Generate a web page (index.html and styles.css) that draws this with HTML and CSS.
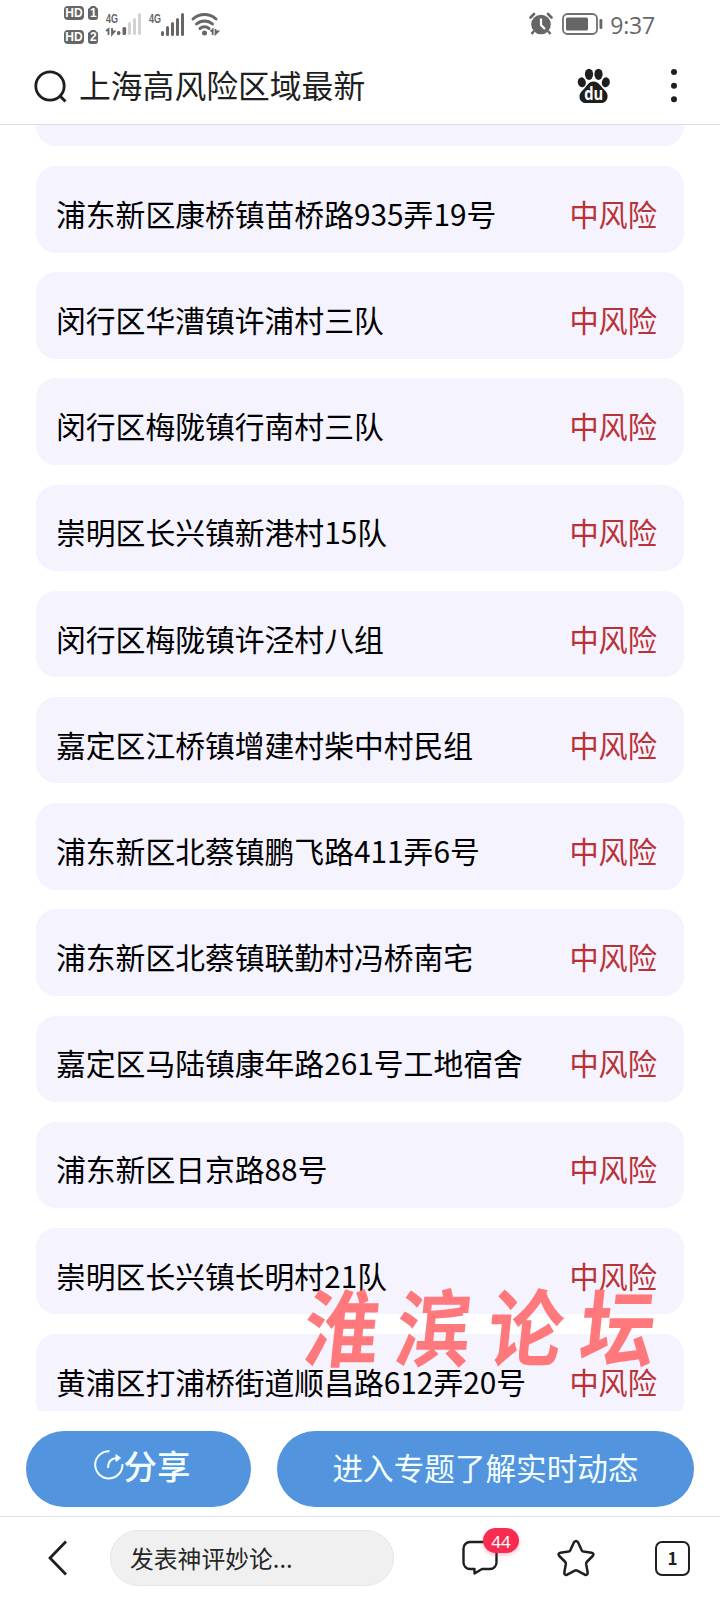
FILE: index.html
```html
<!DOCTYPE html>
<html lang="zh-CN">
<head>
    <meta charset="UTF-8">
    <meta name="viewport" content="width=device-width, initial-scale=1.0">
    <title>上海高风险区域最新</title>
    <link rel="stylesheet" href="styles.css">
</head>
<body>

    <div class="page">
        <div class="status-bar">
            <svg class="status-left" width="156" height="48" viewBox="0 0 156 48">
                <g fill="#666">
                    <rect x="0" y="6" width="20" height="14" rx="4"/>
                    <path d="M27.500 6h3.500l3 3v8a3 3 0 0 1-3 3h-4a3 3 0 0 1-3-3V9z"/>
                    <rect x="0" y="30" width="20" height="14" rx="4"/>
                    <path d="M27.500 30h3.500l3 3v8a3 3 0 0 1-3 3h-4a3 3 0 0 1-3-3v-8z"/>
                    <rect x="53" y="31" width="3.4" height="4" rx="1.5"/>
                    <rect x="58.5" y="27" width="3.6" height="8" rx="1.5"/>
                    <rect x="97" y="31" width="3" height="5" rx="1.5"/>
                    <rect x="102" y="26" width="3" height="10" rx="1.5"/>
                    <rect x="107" y="22" width="3" height="14" rx="1.5"/>
                    <rect x="112" y="18" width="3" height="18" rx="1.5"/>
                    <rect x="117" y="13" width="3" height="23" rx="1.5"/>
                </g>
                <g fill="#d2d2d2">
                    <rect x="64" y="22" width="3" height="13" rx="1.5"/>
                    <rect x="69" y="18" width="3" height="17" rx="1.5"/>
                    <rect x="74" y="13" width="3" height="22" rx="1.5"/>
                </g>
                <g class="hd-text">
                    <text x="10" y="17.2">HD</text>
                    <text x="29.3" y="17.2">1</text>
                    <text x="10" y="41.2">HD</text>
                    <text x="29.3" y="41.2">2</text>
                </g>
                <g class="net-text">
                    <text x="42" y="22.500" textLength="12" lengthAdjust="spacingAndGlyphs">4G</text>
                    <text x="85" y="22.500" textLength="12" lengthAdjust="spacingAndGlyphs">4G</text>
                </g>
                <g fill="none" stroke="#666" stroke-width="1.800">
                    <path d="M42 31l2.500-2v6M48 28v6.500l2.500-3h-2"/>
                    <path d="M146.500 31.500l2.200-2v5.500M151.500 29v5l2.500-2.500h-2"/>
                </g>
                <g fill="none" stroke="#666" stroke-width="3" stroke-linecap="round">
                    <path d="M129 19a17 17 0 0 1 23 0"/>
                    <path d="M132.500 24a12 12 0 0 1 16 0"/>
                    <path d="M136 28.500a7 7 0 0 1 9 0"/>
                </g>
                <circle cx="140.500" cy="33" r="2.500" fill="#666"/>
            </svg>
            <div class="status-right">
                <svg width="24" height="24" viewBox="0 0 24 24">
                    <circle cx="12" cy="12.500" r="9.800" fill="#666"/>
                    <path d="M1.500 5.500L5 2M22.500 5.500L19 2" stroke="#666" stroke-width="2.600" stroke-linecap="round"/>
                    <path d="M5 19l-2.500 3M19 19l2.500 3" stroke="#666" stroke-width="2.500"/>
                    <path d="M12 6.500v6.500l4 4" fill="none" stroke="#fff" stroke-width="2.200"/>
                </svg>
                <svg class="battery" width="41" height="22" viewBox="0 0 41 22">
                    <rect x="1" y="1" width="34" height="20" rx="4.500" fill="none" stroke="#707070" stroke-width="1.800"/>
                    <rect x="4" y="4.500" width="22" height="13" rx="1.500" fill="#666"/>
                    <rect x="37.500" y="6" width="2.800" height="10" rx="1.200" fill="#666"/>
                </svg>
                <span class="clock">9:37</span>
            </div>
        </div>

        <div class="header">
            <svg class="search-icon" width="34" height="34" viewBox="0 0 34 34">
                <circle cx="16" cy="16" r="14.200" fill="none" stroke="#1f1f1f" stroke-width="2.800"/>
                <path d="M26 26l5.500 5.500" stroke="#1f1f1f" stroke-width="3"/>
            </svg>
            <h1 class="query">上海高风险区域最新</h1>
            <svg class="paw" width="34" height="36" viewBox="0 0 34 36">
                <g fill="#1f1f1f">
                    <ellipse cx="12" cy="6.300" rx="4.100" ry="5.600"/>
                    <ellipse cx="21.500" cy="6.300" rx="4.100" ry="5.600"/>
                    <ellipse cx="4.800" cy="14.300" rx="4" ry="5" transform="rotate(-12 4.800 14.300)"/>
                    <ellipse cx="28.800" cy="14.300" rx="4" ry="5" transform="rotate(12 28.800 14.300)"/>
                    <path d="M16.500 13.500c5 0 7 4.500 10 7.500 3 2.800 4.600 5 4 8.500-.6 3.700-3.300 5.500-6.500 5.500H9c-3.500 0-6-2-6.500-5.500-.4-3.500 1.500-5.800 4.500-8.500 3-3 4.500-7.500 9.500-7.500z"/>
                </g>
                <text class="paw-text" x="16.700" y="31.500" textLength="19" lengthAdjust="spacingAndGlyphs">du</text>
            </svg>
            <svg class="more" width="8" height="36" viewBox="0 0 8 36">
                <g fill="#1f1f1f">
                    <circle cx="4" cy="4" r="3"/>
                    <circle cx="4" cy="17.700" r="3"/>
                    <circle cx="4" cy="31.300" r="3"/>
                </g>
            </svg>
        </div>

        <div class="list">
            <div class="item item-first"></div>
            <div class="item"><span>浦东新区康桥镇苗桥路935弄19号</span><span class="risk">中风险</span></div>
            <div class="item"><span>闵行区华漕镇许浦村三队</span><span class="risk">中风险</span></div>
            <div class="item"><span>闵行区梅陇镇行南村三队</span><span class="risk">中风险</span></div>
            <div class="item"><span>崇明区长兴镇新港村15队</span><span class="risk">中风险</span></div>
            <div class="item"><span>闵行区梅陇镇许泾村八组</span><span class="risk">中风险</span></div>
            <div class="item"><span>嘉定区江桥镇增建村柴中村民组</span><span class="risk">中风险</span></div>
            <div class="item"><span>浦东新区北蔡镇鹏飞路411弄6号</span><span class="risk">中风险</span></div>
            <div class="item"><span>浦东新区北蔡镇联勤村冯桥南宅</span><span class="risk">中风险</span></div>
            <div class="item"><span>嘉定区马陆镇康年路261号工地宿舍</span><span class="risk">中风险</span></div>
            <div class="item"><span>浦东新区日京路88号</span><span class="risk">中风险</span></div>
            <div class="item"><span>崇明区长兴镇长明村21队</span><span class="risk">中风险</span></div>
            <div class="item"><span>黄浦区打浦桥街道顺昌路612弄20号</span><span class="risk">中风险</span></div>
            <div class="watermark"><span>淮</span><span>滨</span><span>论</span><span>坛</span></div>
        </div>

        <div class="actions">
            <div class="btn btn-share">
                <svg width="30" height="30" viewBox="0 0 30 30" fill="none" stroke="#f4ffff" stroke-width="2">
                    <path d="M15.500 1.200A13.600 13.600 0 1 0 28.400 14"/>
                    <path d="M14 18c0-6 3-10 10-10"/>
                    <path d="M22 4.500l4.500 3.500-4.500 3.500z" fill="#f4ffff" stroke-width="1"/>
                </svg>
                <span>分享</span>
            </div>
            <div class="btn btn-topic">进入专题了解实时动态</div>
        </div>

        <div class="toolbar">
            <svg class="back" width="22" height="38" viewBox="0 0 22 38">
                <path d="M19 2.500L3 19l16 16.500" fill="none" stroke="#1f1f1f" stroke-width="2.800"/>
            </svg>
            <div class="comment-input">发表神评妙论...</div>
            <div class="comment-icon">
                <svg width="36" height="36" viewBox="0 0 36 36">
                    <path d="M8 2h20a6.500 6.500 0 0 1 6.500 6.500v14A6.500 6.500 0 0 1 28 29h-8l-7.500 4.500V29H8a6.500 6.500 0 0 1-6.500-6.500v-14A6.500 6.500 0 0 1 8 2z" fill="none" stroke="#1f1f1f" stroke-width="2.400" stroke-linejoin="round"/>
                </svg>
                <span class="badge">44</span>
            </div>
            <svg class="star" width="38" height="38" viewBox="0 0 38 38">
                <path d="M17 3.300Q19 .5 21 3.300L24.700 11.300Q25.300 12.400 26.500 12.600L34.500 13.700Q37.600 14.500 35.700 17L29.700 23Q29 24 29.200 25.300L30.700 33.500Q30.800 36.600 27.800 35.700L20.200 31.600Q19 31 17.800 31.600L10.200 35.700Q7.200 36.600 7.300 33.500L8.800 25.300Q9 24 8.300 23L2.300 17Q.4 14.500 3.500 13.700L11.500 12.600Q12.700 12.400 13.300 11.300Z" fill="none" stroke="#1f1f1f" stroke-width="2.500" stroke-linejoin="round"/>
            </svg>
            <div class="tabs">1</div>
        </div>
    </div>

</body>
</html>
```
FILE: styles.css
```css
* {
    box-sizing: border-box;
}
body {
    margin: 0;
    background-color: #fff;
    font-family: "Noto Sans CJK SC", "Noto Sans", sans-serif;
    color: #000;
}
.page {
    width: 720px;
    height: 1600px;
    display: flex;
    flex-direction: column;
    overflow: hidden;
}

/* status bar */
.status-bar {
    height: 48px;
    flex: none;
    display: flex;
    justify-content: space-between;
    padding: 0 65px 0 64px;
}
.status-right {
    display: flex;
    align-items: center;
    height: 48px;
}
.battery {
    margin-left: 9px;
}
.clock {
    margin-left: 7px;
    font-family: "Open Sans", sans-serif;
    font-size: 23px;
    line-height: 48px;
    padding-top: 2px;
    letter-spacing: -0.200px;
    color: #666;
}
.hd-text text {
    font: bold 12px "Liberation Sans", sans-serif;
    fill: #fff;
    text-anchor: middle;
}
.net-text text {
    font: bold 13px "Liberation Sans", sans-serif;
    fill: #666;
}

/* search header */
.header {
    height: 77px;
    flex: none;
    display: flex;
    align-items: center;
    padding: 0 42px 0 34px;
    border-bottom: 1px solid #dcdce2;
}
.query {
    flex: 1;
    margin: 0 0 5px 11px;
    font-size: 31.8px;
    font-weight: 400;
    line-height: 48px;
    color: #1f1f1f;
}
.search-icon {
    margin-top: 1px;
}
.paw-text {
    font: bold 18px "Open Sans", sans-serif;
    fill: #fff;
    text-anchor: middle;
}
.more {
    margin-left: 59px;
}

/* risk area list */
.list {
    position: relative;
    height: 1285.500px;
    flex: none;
    padding: 0 36px;
    overflow: hidden;
}
.item {
    height: 86.500px;
    margin-bottom: 19.700px;
    padding: 7px 27px 0 20px;
    display: flex;
    align-items: center;
    justify-content: space-between;
    background-color: #f5f3fe;
    border-radius: 20px;
    font-size: 29.800px;
    line-height: 44px;
    white-space: nowrap;
}
.item-first {
    margin-top: -65.200px;
}
.risk {
    font-size: 29.200px;
    color: #b93237;
}
.watermark {
    position: absolute;
    left: 305px;
    top: 1157px;
    display: flex;
    gap: 17px;
    font-size: 75px;
    font-weight: 700;
    line-height: 84px;
    color: #ff787c;
    transform: skewX(-6deg) scaleY(1.120);
}

/* bottom buttons */
.actions {
    height: 105px;
    flex: none;
    display: flex;
    gap: 26px;
    padding: 20.500px 26px 0;
}
.btn {
    height: 76px;
    display: flex;
    align-items: center;
    justify-content: center;
    padding-bottom: 5px;
    border-radius: 38px;
    background-color: #5294de;
    color: #f4ffff;
    font-size: 30.600px;
    line-height: 44px;
}
.btn-share {
    width: 225px;
    padding-left: 7px;
    padding-bottom: 8px;
    font-size: 33.500px;
    font-weight: 500;
}
.btn-topic {
    width: 417px;
}

.toolbar {
    flex: 1;
    display: flex;
    align-items: center;
    padding: 0 30px 0 47px;
    border-top: 1px solid #dce4ec;
}
.comment-input {
    width: 284px;
    height: 56px;
    margin-left: 41px;
    padding-left: 19px;
    border: 1px solid #e6e6e6;
    border-radius: 28px;
    background-color: #f0f0f0;
    font-size: 23.800px;
    line-height: 54px;
    color: #262626;
}
.comment-icon {
    position: relative;
    height: 36px;
    margin-left: 68px;
}
.badge {
    position: absolute;
    left: 21px;
    top: -12px;
    width: 36px;
    height: 25px;
    border-radius: 13px;
    background-color: #f72c50;
    box-shadow: 0 2px 4px rgba(247, 44, 80, 0.3);
    color: #fff;
    font-family: "Noto Sans", sans-serif;
    font-size: 17px;
    line-height: 27px;
    text-align: center;
}
.star {
    margin-left: 59px;
}
.tabs {
    width: 35px;
    height: 35px;
    margin-left: auto;
    border: 2.500px solid #1f1f1f;
    border-radius: 7px;
    font-size: 17px;
    font-weight: 700;
    line-height: 29px;
    text-align: center;
    color: #1f1f1f;
}
```
